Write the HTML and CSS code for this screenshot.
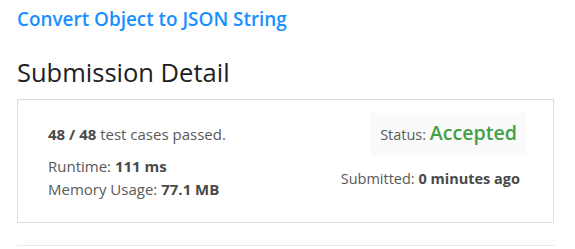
FILE: index.html
```html
<!DOCTYPE html>
<html lang="en">
<head>
    <meta charset="UTF-8">
    <meta name="viewport" content="width=device-width, initial-scale=1.0">
    <title>Submission Detail</title>
    <link rel="stylesheet" href="styles.css">
</head>
<body>
    <div class="main">
        <a class="problem" href="#">Convert Object to JSON String</a>
        <h3>Submission Detail</h3>

        <div class="detail">
            <div class="result">
                <p class="cases"><b>48 / 48</b> test cases passed.</p>
                <p>Runtime: <b>111 ms</b></p>
                <p>Memory Usage: <b>77.1 MB</b></p>
            </div>
            <div class="status">
                <div class="status-box">Status: <span class="accepted">Accepted</span></div>
                <p class="submitted">Submitted: <b>0 minutes ago</b></p>
            </div>
        </div>

        <hr>
    </div>
</body>
</html>
```

FILE: styles.css
```css
body {
    margin: 0;
    padding: 0;
    background: white;
    font-family: "Open Sans", sans-serif;
    color: #595959;
}

.main {
    width: 537px;
    padding: 6px 0 0 17px;
}

.problem {
    display: block;
    color: #1a90ff;
    font-size: 18.9px;
    font-weight: 600;
    line-height: 26px;
    text-decoration: none;
}

h3 {
    margin: 24px 0 11px;
    color: #212121;
    font-size: 25.5px;
    font-weight: 500;
    line-height: 32px;
}

.detail {
    display: flex;
    justify-content: space-between;
    box-sizing: border-box;
    height: 124px;
    border: 1px solid #ddd;
    padding: 0 33px 0 30px;
}

.result {
    padding-top: 23px;
    font-size: 15px;
}

.result p {
    margin: 0;
    line-height: 23px;
}

.result .cases {
    margin-bottom: 9px;
}

b {
    color: #4a4a4a;
    font-weight: bold;
}

.status {
    display: flex;
    flex-direction: column;
    align-items: flex-end;
    padding-top: 13px;
    font-size: 14.5px;
}

.status-box {
    margin-right: -6px;
    background: #fafafa;
    padding: 7px 9px;
    line-height: 26px;
}

.accepted {
    color: #43a047;
    font-size: 19.6px;
    font-weight: 600;
}

.submitted {
    margin: 13px 0 0;
    line-height: 22px;
}

hr {
    margin: 22px 0 0;
    border: none;
    border-top: 1px solid #e8e8e8;
}
```
